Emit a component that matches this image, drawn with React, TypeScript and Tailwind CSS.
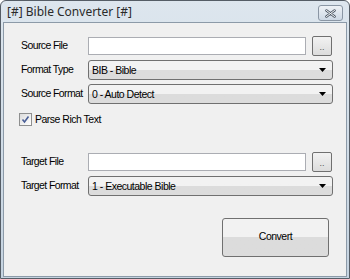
import React from "react";

function Arrow() {
  return (
    <svg width="7" height="4" viewBox="0 0 7 4" className="block">
      <path d="M0 0h7L3.5 4z" fill="#000" />
    </svg>
  );
}

function Combo({ value }: { value: string }) {
  return (
    <div className="flex h-[20px] w-[245px] shrink-0 items-center justify-between rounded-[3px] border border-[#707070] bg-gradient-to-b from-[#f2f2f2] from-50% to-[#dcdcdc] to-50% pl-[3px] pr-[6px] text-[10.5px] leading-none tracking-[-0.5px]">
      <span className="whitespace-nowrap">{value}</span>
      <Arrow />
    </div>
  );
}

function FileRow({ label }: { label: string }) {
  return (
    <div className="flex items-center">
      <span className="w-[67px] shrink-0 whitespace-nowrap text-[10.5px] tracking-[-0.6px]">{label}</span>
      <div className="h-[18px] w-[218px] shrink-0 border border-[#abadb3] bg-white" />
      <div className="ml-[6px] flex h-[20px] w-[20px] shrink-0 items-end justify-center rounded-[2px] border border-[#707070] bg-gradient-to-b from-[#f2f2f2] to-[#dcdcdc] pb-[3px] text-[9px] leading-none text-[#555]">
        ..
      </div>
    </div>
  );
}

function ComboRow({ label, value }: { label: string; value: string }) {
  return (
    <div className="flex items-center">
      <span className="w-[67px] shrink-0 whitespace-nowrap text-[10.5px] tracking-[-0.6px]">{label}</span>
      <Combo value={value} />
    </div>
  );
}

export default function App() {
  return (
    <div
      className="flex h-[279px] w-[350px] flex-col overflow-hidden rounded-t-[6px] border border-[#555d66] bg-gradient-to-b from-[#dde6ee] to-[#c5d3e0] text-black"
      style={{ fontFamily: '"Liberation Sans", Arial, sans-serif' }}
    >
      <div className="flex h-[21px] shrink-0 items-center justify-between pl-[6px] pr-[6px]">
        <span className="text-[12px] text-[#2a2a2a]" style={{ fontFamily: '"Noto Sans", sans-serif' }}>
          [#] Bible Converter [#]
        </span>
        <div className="mt-[3px] flex h-[16px] w-[25px] items-center justify-center rounded-[3px] border border-[#8a96a4] bg-gradient-to-b from-[#eef2f6] to-[#cdd8e4]">
          <svg width="11" height="9" viewBox="0 0 11 9">
            <path d="M1.5 1.5l8 6M9.5 1.5l-8 6" stroke="#4b5663" strokeWidth="2.6" strokeLinecap="round" />
            <path d="M1.5 1.5l8 6M9.5 1.5l-8 6" stroke="#fff" strokeWidth="1" strokeLinecap="round" />
          </svg>
        </div>
      </div>
      <div className="mx-[2px] mb-[1px] flex-1 border border-[#8c9aa8] bg-[#f0f0f0] pl-[17px] pt-[13px]">
        <div className="flex flex-col gap-[4px]">
          <FileRow label="Source File" />
          <ComboRow label="Format Type" value="BIB - Bible" />
          <ComboRow label="Source Format" value="0 - Auto Detect" />
        </div>
        <div className="-ml-[2px] mt-[8px] flex items-center gap-[3px]">
          <div className="flex h-[13px] w-[13px] items-center justify-center border border-[#8e8f8f] bg-gradient-to-br from-[#dcdcdc] to-white">
            <svg width="9" height="9" viewBox="0 0 9 9">
              <path d="M1.5 4.5l2 2.5L7.5 1.5" stroke="#4a5f97" strokeWidth="1.6" fill="none" />
            </svg>
          </div>
          <span className="text-[10.5px] tracking-[-0.5px]">Parse Rich Text</span>
        </div>
        <div className="mt-[24px] flex flex-col gap-[4px]">
          <FileRow label="Target File" />
          <ComboRow label="Target Format" value="1 - Executable Bible" />
        </div>
        <div className="mt-[22px] flex justify-end pr-[17px]">
          <div className="flex h-[39px] w-[107px] items-center justify-center rounded-[3px] border border-[#707070] bg-gradient-to-b from-[#f2f2f2] from-50% to-[#dcdcdc] to-50% text-[10.5px] tracking-[-0.5px]">
            Convert
          </div>
        </div>
      </div>
    </div>
  );
}
